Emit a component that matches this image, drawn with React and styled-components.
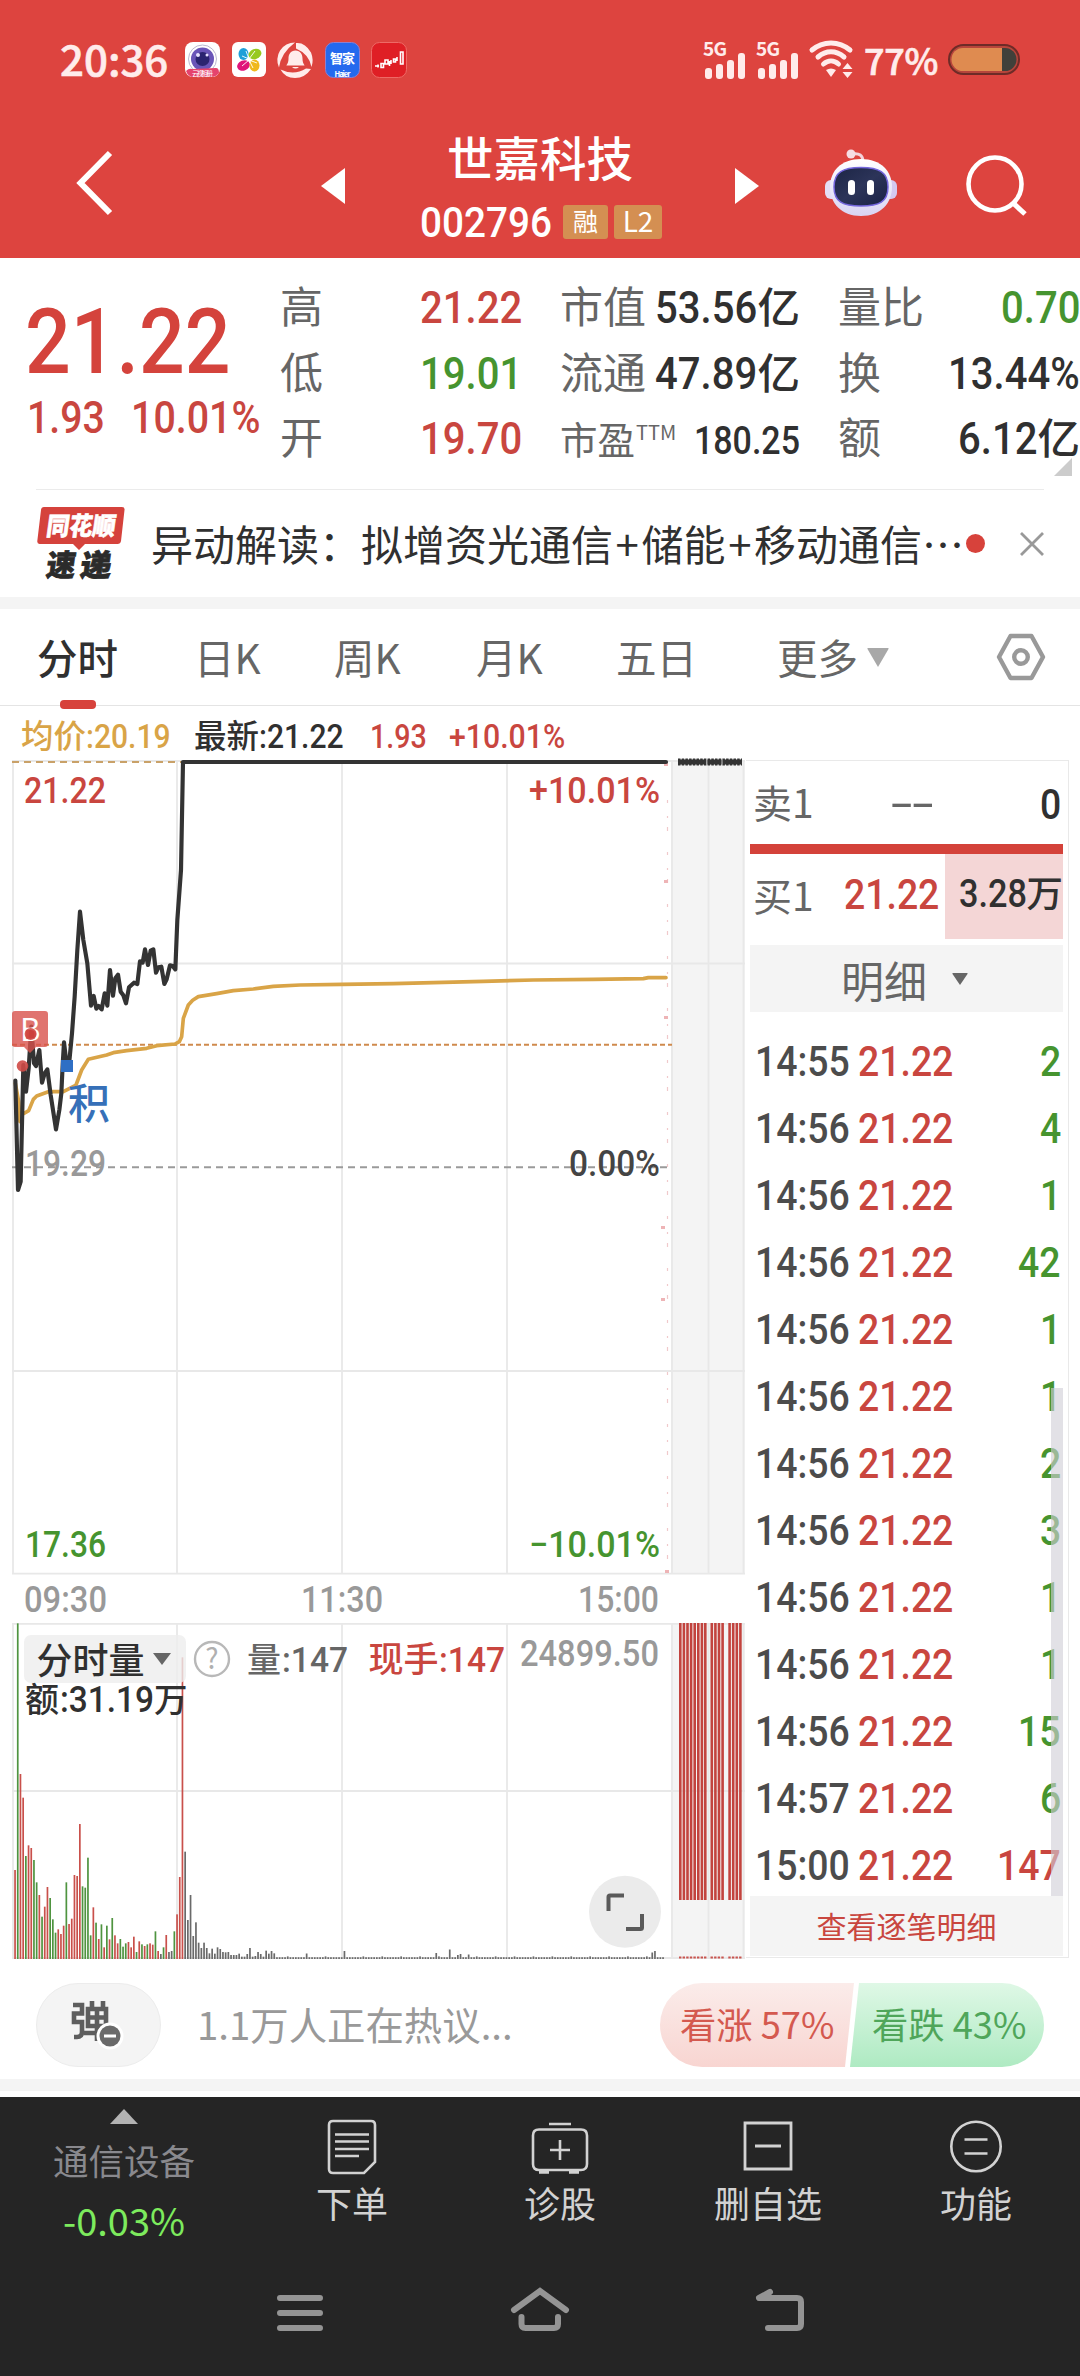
import React from "react";
import styled, { createGlobalStyle, css } from "styled-components";

const CJK = `"Noto Sans CJK SC", "Noto Sans", sans-serif`;
const DIN = `Roboto, "Noto Sans CJK SC", sans-serif`;
const RED = "#c9463f";
const GREEN = "#46942f";
const INK = "#303030";
const GRAY = "#666";

const Global = createGlobalStyle`
  * { box-sizing: border-box; }
  body { margin: 0; background: #fff; font-family: ${CJK}; color: ${INK}; }
  svg { display: block; overflow: visible; }
`;

const ADV = { ".": 0.28, ":": 0.27, "%": 0.735, "-": 0.39, "+": 0.556 };
const textWidth = (t) => [...t].reduce((w, c) => w + (ADV[c] || 0.564), 0);

const NumText = styled.span`
  display: inline-block;
  font-family: ${DIN};
  font-weight: ${(p) => p.$weight};
  font-size: ${(p) => p.$size}px;
  color: ${(p) => p.$color || "inherit"};
  white-space: pre;
  transform: scaleX(${(p) => p.$sx});
  transform-origin: left center;
  margin-right: ${(p) => -(1 - p.$sx) * p.$em * p.$size}px;
`;
const Num = ({ children, size = 45, sx = 0.89, color, weight = 500 }) => (
  <NumText $size={size} $sx={sx} $em={textWidth(children)} $color={color} $weight={weight}>
    {children}
  </NumText>
);

const Page = styled.div`
  width: 1080px;
  height: 2376px;
  display: flex;
  flex-direction: column;
  overflow: hidden;
  background: #fff;
`;

/* ---------- status + title ---------- */
const Header = styled.header`
  height: 258px;
  background: #dd443f;
  flex: none;
`;
const StatusBar = styled.div`
  height: 118px;
  padding: 0 60px;
  display: flex;
  align-items: center;
  justify-content: space-between;
  color: #ffeceb;
`;
const StatusGroup = styled.div`
  display: flex;
  align-items: center;
`;
const Clock = styled.span`
  font-size: 42px;
  font-weight: 500;
  -webkit-text-stroke: 0.6px #ffeceb;
  line-height: 50px;
  width: 125px;
  margin-top: -3px;
`;
const AppIcons = styled.div`
  display: flex;
  gap: 11.6px;
  margin-top: 1px;
`;
const Percent = styled.span`
  font-size: 36px;
  font-weight: 500;
  -webkit-text-stroke: 0.7px #ffeceb;
  line-height: 40px;
  width: 84px;
  margin: -1px 0 0 10px;
  letter-spacing: -0.3px;
`;
const TitleBar = styled.div`
  height: 140px;
  display: grid;
  grid-template-columns: 321px 24px 390px 24px 66px 72px 69px 60px;
`;
const Slot = styled.div`
  padding-top: ${(p) => p.$top}px;
  padding-left: ${(p) => p.$left || 0}px;
`;
const TitleBlock = styled.div`
  padding-top: 11px;
`;
const StockName = styled.h1`
  margin: 0;
  font-size: 46.5px;
  line-height: 54px;
  font-weight: 500;
  color: #fff;
  text-align: center;
`;
const CodeRow = styled.div`
  display: flex;
  align-items: center;
  height: 50px;
  margin-top: 14px;
  padding-left: 75px;
  color: #fff;
`;
const Badge = styled.span`
  width: ${(p) => p.$w}px;
  height: 34px;
  margin-left: ${(p) => p.$ml}px;
  border-radius: 3px;
  background: #d48f52;
  font-size: ${(p) => p.$fs}px;
  line-height: 31px;
  text-align: center;
`;

/* ---------- quote ---------- */
const Quote = styled.section`
  height: 231px;
  flex: none;
  padding-top: 14px;
  display: grid;
  grid-template-columns: 280px 242px 38px 240px 38px 242px;
  position: relative;
`;
const PriceBlock = styled.div`
  padding-left: 25px;
`;
const BigPrice = styled.div`
  height: 100px;
  line-height: 100px;
  margin-top: 21px;
`;
const Change = styled.div`
  display: flex;
  gap: 26px;
  height: 50px;
  line-height: 50px;
  padding-left: 2px;
  margin-top: 0;
`;
const StatCol = styled.div`
  grid-column: ${(p) => p.$col};
`;
const StatRow = styled.div`
  display: flex;
  justify-content: space-between;
  align-items: baseline;
  height: 65.5px;
  line-height: 65.5px;
  font-size: 42.5px;
  white-space: nowrap;
`;
const StatLabel = styled.span`
  color: ${GRAY};
  font-size: ${(p) => p.$fs || 43}px;
  sup {
    font-size: 20px;
    line-height: 0;
    vertical-align: 14px;
    margin-left: 1px;
  }
`;
const StatValue = styled.span`
  color: ${(p) => p.$color || INK};
  font-weight: 500;
`;
const Corner = styled.i`
  position: absolute;
  right: 8px;
  top: 200px;
  border-style: solid;
  border-width: 0 0 18px 18px;
  border-color: transparent transparent #ccc transparent;
`;

/* ---------- news ---------- */
const News = styled.section`
  height: 108px;
  flex: none;
  margin: 0 36px;
  border-top: 1.5px solid #ebebeb;
  display: flex;
  align-items: center;
`;
const NewsText = styled.div`
  font-size: 42px;
  line-height: 60px;
  width: 813px;
  margin-left: 24px;
  margin-top: -2px;
  white-space: nowrap;
  flex: none;
  b { font-weight: 400; margin: 0 2.6px; }
`;
const Band = styled.div`
  height: 12px;
  flex: none;
  background: #f4f4f4;
`;
const RedDot = styled.i`
  width: 19px;
  height: 19px;
  margin-left: 2px;
  margin-right: 35px;
  border-radius: 50%;
  background: #d7423b;
  flex: none;
`;

/* ---------- tabs ---------- */
const Tabs = styled.nav`
  height: 97px;
  flex: none;
  border-bottom: 1.5px solid #e4e4e4;
  display: grid;
  grid-template-columns: 37px 157px 140px 142px 140px 161px 219px 1fr;
`;
const Tab = styled.div`
  font-size: 40.5px;
  line-height: 96px;
  color: ${(p) => (p.$active ? INK : GRAY)};
  font-weight: ${(p) => (p.$active ? 500 : 400)};
  display: flex;
  align-items: center;
  position: relative;
  padding-bottom: 4px;
  ${(p) =>
    p.$active &&
    css`
      &::after {
        content: "";
        position: absolute;
        left: 23px;
        bottom: 0;
        width: 36px;
        height: 9px;
        border-radius: 4px;
        background: #d7423b;
      }
    `}
`;

/* ---------- chart info ---------- */
const InfoRow = styled.div`
  height: 50px;
  flex: none;
  padding: 0 0 0 21px;
  display: flex;
  align-items: baseline;
  line-height: 55px;
  font-size: 32.5px;
`;
const Info = styled.span`
  width: ${(p) => p.$w}px;
  color: ${(p) => p.$color};
  font-weight: 500;
  white-space: nowrap;
`;

const Main = styled.section`
  height: 1206px;
  flex: none;
  display: flex;
`;

/* ---------- order panel ---------- */
const Panel = styled.aside`
  width: 323px;
  height: 1198px;
  margin-top: 4px;
  border: 1.5px solid #e9e9e9;
  border-left: 0;
  padding: 0 5px 0 4px;
  display: flex;
  flex-direction: column;
`;
const BookRow = styled.div`
  height: ${(p) => p.$h}px;
  display: grid;
  grid-template-columns: 90px 1fr 118px;
  align-items: center;
  color: ${GRAY};
  font-size: 39px;
  line-height: 60px;
`;
const BookLabel = styled.span`
  padding-left: 3px;
  display: flex;
  align-items: baseline;
  margin-top: ${(p) => p.$mt || 0}px;
`;
const BookPrice = styled.span`
  padding-left: ${(p) => p.$pl}px;
  margin-top: ${(p) => p.$mt || 0}px;
`;
const BookQty = styled.span`
  height: 100%;
  padding: ${(p) => p.$pt}px ${(p) => p.$pr}px 0 0;
  text-align: right;
  color: ${INK};
  font-size: 36.5px;
  font-weight: 500;
  white-space: nowrap;
  background: ${(p) => p.$bg || "none"};
`;
const RedBar = styled.div`
  height: 10px;
  background: #d4423a;
`;
const DetailHead = styled.div`
  height: 67px;
  margin-top: 6px;
  background: #f4f4f4;
  display: flex;
  align-items: center;
  gap: 25px;
  padding-left: 91px;
  font-size: 43px;
  line-height: 62px;
  color: ${GRAY};
`;
const Ticks = styled.div`
  position: relative;
  padding-top: 16px;
  height: 884px;
`;
const Tick = styled.div`
  height: 67px;
  line-height: 67px;
  display: grid;
  grid-template-columns: 103px 120px 1fr;
  padding: 0 2px 0 5px;
  span:last-child { justify-self: end; }
`;
const ScrollThumb = styled.i`
  position: absolute;
  right: 0;
  top: 376px;
  width: 12px;
  height: 508px;
  background: rgba(208, 206, 214, 0.62);
`;
const ViewAll = styled.div`
  height: 60px;
  line-height: 58px;
  background: #f4f4f4;
  color: ${RED};
  font-size: 30px;
  text-align: center;
`;

/* ---------- comment strip ---------- */
const Talk = styled.section`
  height: 117px;
  flex: none;
  padding: 21px 36px 12px;
  display: flex;
`;
const Pill = styled.div`
  width: 125px;
  height: 84px;
  border-radius: 42px;
  border: 1px solid #ececec;
  background: #f4f4f4;
  padding: 15px 0 0 33px;
`;
const TalkText = styled.div`
  width: 499px;
  padding-left: 36px;
  font-size: 38.4px;
  line-height: 81px;
  color: #999;
`;
const Vote = styled.div`
  display: flex;
  font-size: 36.3px;
  line-height: 80px;
`;
const VoteHalf = styled.div`
  width: 194px;
  height: 84px;
  margin-left: ${(p) => (p.$up ? 0 : -4)}px;
  padding-left: ${(p) => (p.$up ? 20 : 22)}px;
  white-space: nowrap;
  color: ${(p) => (p.$up ? "#d4594f" : "#4fa65a")};
  background: ${(p) =>
    p.$up ? "linear-gradient(#fbecea, #f8d5d1)" : "linear-gradient(#dff8e6, #aeeac2)"};
  border-radius: ${(p) => (p.$up ? "42px 0 0 42px" : "0 42px 42px 0")};
  clip-path: ${(p) =>
    p.$up ? "polygon(0 0, 100% 0, 185px 100%, 0 100%)" : "polygon(9px 0, 100% 0, 100% 100%, 0 100%)"};
`;

/* ---------- bottom ---------- */
const Toolbar = styled.nav`
  height: 148px;
  margin-top: 6px;
  flex: none;
  background: #252525;
  display: grid;
  grid-template-columns: 248px 208px 208px 208px 208px;
`;
const Sector = styled.div`
  display: flex;
  flex-direction: column;
  align-items: center;
  padding-top: 12px;
  color: #89898e;
  font-size: 35.5px;
  line-height: 44px;
  white-space: nowrap;
  > svg { margin-bottom: 14px; }
`;
const SectorChange = styled.div`
  margin-top: 16px;
  color: #7deb5d;
  font-size: 38px;
  line-height: 44px;
`;
const Tool = styled.div`
  display: flex;
  flex-direction: column;
  align-items: center;
  padding-top: 22px;
  color: #d2d2d2;
  font-size: 36px;
  line-height: 44px;
  > svg { margin-bottom: 5px; }
`;
const SystemNav = styled.nav`
  flex: 1;
  background: #252525;
  display: flex;
  justify-content: center;
  gap: 180px;
  padding-top: 36px;
`;

/* ---------- glyphs ---------- */
const Signal = () => (
  <svg width="53" height="40" viewBox="0 0 53 40" fill="#ffeceb">
    <text x="0" y="17" fontFamily="Noto Sans CJK SC, sans-serif" fontWeight="700" fontSize="19" textLength="24">5G</text>
    <rect x="2" y="29" width="7" height="11" rx="3" />
    <rect x="13" y="25" width="7" height="15" rx="3" />
    <rect x="24" y="21" width="7" height="19" rx="3" />
    <rect x="35" y="14" width="7" height="26" rx="3" />
  </svg>
);
const Wifi = () => (
  <svg width="45" height="38" viewBox="0 0 45 38" fill="none" stroke="#ffeceb" strokeWidth="5" strokeLinecap="round">
    <path d="M3 10C14 .5 30 .5 41 10" />
    <path d="M9 17C17 10 27 10 35 17" />
    <path d="M14.500 24C19 20 25 20 29.500 24" />
    <path d="M17 30q5-3 10 0l-5 7z" fill="#ffeceb" stroke="none" />
    <path d="M38.500 23l5 6h-10zM38.500 38l5-6h-10z" fill="#ffeceb" stroke="none" />
  </svg>
);
const BatteryIcon = styled.svg`
  margin-top: 2px;
`;
const Battery = () => (
  <BatteryIcon width="72" height="32" viewBox="0 0 72 32">
    <rect x="1" y="1" width="70" height="29" rx="14.500" fill="#b8453b" stroke="#6e2b27" strokeWidth="2" />
    <path d="M15 4H54V27H15A11.500 11.500 0 0 1 15 4z" fill="#df8b50" />
    <path d="M54 4h3a11.500 11.500 0 0 1 0 23h-3z" fill="#40403a" />
  </BatteryIcon>
);
const AppCamera = () => (
  <svg width="35" height="36" viewBox="0 0 35 36">
    <rect width="35" height="35" rx="8" fill="#fff" />
    <circle cx="17.500" cy="17" r="14" fill="none" stroke="#bbb7cf" />
    <circle cx="17.500" cy="17" r="11.500" fill="#6a55b8" />
    <circle cx="17.500" cy="17" r="7" fill="#2b2470" />
    <circle cx="13" cy="13" r="2" fill="#e8e2ff" />
    <circle cx="22" cy="13" r="1.500" fill="#e8e2ff" />
    <path d="M1 29q3-3 6-2l24-1q3 0 3 5q-3 4-8 4H9q-6 0-8-6z" fill="#e5436d" />
    <text x="7" y="34" fontSize="7" fill="#fff" fontFamily="Noto Sans CJK SC, sans-serif" textLength="21">云视相册</text>
  </svg>
);
const AppPetals = () => (
  <svg width="35" height="36" viewBox="0 0 35 36">
    <rect width="34" height="35" rx="6" fill="#fff" />
    <ellipse cx="11.500" cy="12" rx="5" ry="6" fill="#1f9fd8" />
    <ellipse cx="23" cy="12" rx="6.500" ry="5" fill="#97c91f" transform="rotate(-20 23 12)" />
    <ellipse cx="11.500" cy="23.500" rx="6.500" ry="5" fill="#e0147a" transform="rotate(-20 11.500 23.500)" />
    <ellipse cx="22.500" cy="23.500" rx="5" ry="6" fill="#f0b81c" />
    <path d="M10 14l7 3-3-8M25 21l-8-3 4 8M17 17l6-8M17 18l-7 6" stroke="#fff" fill="none" strokeWidth=".9" />
  </svg>
);
const AppBell = () => (
  <svg width="35" height="36" viewBox="0 0 35 36">
    <g fill="#ffeceb">
      <path d="M17 .5A17.500 17.500 0 0 0 1 25.500Q3 11 17 .5z" />
      <path d="M18 1Q27 0 33 10.500Q36 18 33.500 25Q31 12 18 6.500z" />
      <path d="M2.500 27.500Q16 34 28 26.500L33 27Q27 36 17 36Q7 36 2.500 27.500z" />
    </g>
    <path d="M17.500 8.500c5 0 7 4 7 8 0 5 2 6 2 7H8.500c0-1 2-2 2-7 0-4 2-8 7-8zM14 25h7q-3.500 3-7 0z" fill="#ffeceb" />
  </svg>
);
const AppHome = () => (
  <svg width="35" height="36" viewBox="0 0 35 36" fill="#fff" fontFamily="Noto Sans CJK SC, sans-serif">
    <rect x=".5" y=".5" width="34" height="35" rx="8" fill="#2469ee" stroke="#8c7fd0" />
    <text x="5" y="20.500" fontSize="13" fontWeight="700" textLength="25">智家</text>
    <text x="9.500" y="34.500" fontSize="7.500" fontWeight="700" textLength="16">Haier</text>
  </svg>
);
const AppTrend = () => (
  <svg width="36" height="36" viewBox="0 0 36 36">
    <rect x=".5" y=".5" width="35" height="35" rx="8" fill="#df1f25" stroke="#ee6a66" />
    <g stroke="#fff" strokeWidth="1.600" fill="none">
      <path d="M4 24h4M7 22.500v3M10 21.500h2.500v4H10zM14 18h3v4h-3zM18.500 19v5M20 18v4M22.500 17h2v3h-2zM26 15v4M29.500 10h2.500v12h-2.500z" />
    </g>
  </svg>
);
const Robot = () => (
  <svg width="72" height="70" viewBox="0 0 72 70">
    <defs>
      <linearGradient id="shell" x1="0" y1="0" x2="0" y2="1">
        <stop offset="0" stopColor="#fff" />
        <stop offset="1" stopColor="#d9d4f3" />
      </linearGradient>
      <linearGradient id="visor" x1="0" y1="0" x2="1" y2="1">
        <stop offset="0" stopColor="#1c2545" />
        <stop offset=".5" stopColor="#2c3459" />
        <stop offset="1" stopColor="#1a2145" />
      </linearGradient>
    </defs>
    <path d="M27 5q11-2 11 8" fill="none" stroke="#f3d4dc" strokeWidth="3" />
    <circle cx="26" cy="5" r="4.500" fill="#f6dde4" />
    <rect x="0" y="31" width="14" height="19" rx="6" fill="#e4def5" />
    <rect x="58" y="31" width="14" height="19" rx="6" fill="#d4c9f0" />
    <path d="M36 10C56 10 67 22 67 38S56 67 36 67 5 54 5 38 16 10 36 10z" fill="url(#shell)" />
    <path d="M36 18.500C54 18.500 63 23 63 38S54 57 36 57 9 53 9 38 18 18.500 36 18.500z" fill="url(#visor)" stroke="#7466dc" strokeWidth="1.500" />
    <rect x="23" y="31" width="7" height="15" rx="3.500" fill="#fff" />
    <rect x="42" y="31" width="7" height="15" rx="3.500" fill="#fff" />
  </svg>
);
const NewsLogo = () => (
  <svg width="91" height="74" viewBox="0 0 91 74" fontFamily="Noto Sans CJK SC, sans-serif" fontWeight="900">
    <path d="M8 0H86q3 0 2.500 3L85 34q-.5 3-3.500 3H49l-6 6-6-6H3.500Q1 37 1.300 34L5 3Q5.300 0 8 0z" fill="#d5423c" />
    <g transform="skewX(-8)">
      <text x="13.500" y="28" fontSize="25" fill="#fff" stroke="#fff" strokeWidth=".6" textLength="69" lengthAdjust="spacingAndGlyphs">同花顺</text>
      <text x="19" y="69" fontSize="30" fill="#2b2b2b" stroke="#2b2b2b" strokeWidth=".8" textLength="29" lengthAdjust="spacingAndGlyphs">速</text>
      <text x="53" y="69" fontSize="30" fill="#2b2b2b" stroke="#2b2b2b" strokeWidth=".8" textLength="31" lengthAdjust="spacingAndGlyphs">递</text>
    </g>
  </svg>
);
const Down = ({ w, h, color, ml = 0 }) => (
  <svg width={w + ml} height={h} viewBox={`${-ml} 0 ${w + ml} ${h}`}>
    <path d={`M1 0H${w - 1}Q${w} 0 ${w - 0.5} 1L${w / 2} ${h}L.5 1Q0 0 1 0z`} fill={color} />
  </svg>
);

/* ---------- intraday chart ---------- */
const PRICE = "46,1022 54,1350 62,1325 70,975 78,1055 86,985 94,860 102,970 108,978 118,930 126,1028 134,1000 142,988 152,1065 168,1168 178,1110 184,1060 188,975 192,907 200,975 206,985 216,880 224,770 232,630 240,515 250,600 262,670 273,797 281,768 289,806 296,798 305,808 314,760 322,797 330,690 339,767 346,715 354,704 362,755 370,766 378,790 387,742 402,728 412,732 420,664 428,668 435,628 444,675 452,632 460,628 468,698 475,682 484,680 493,732 500,718 510,676 518,678 526,688 532,540 543,390 549,66 1998,66";
const AVERAGE = "46,1030 56,1085 60,1145 64,1125 86,1112 100,1078 110,1068 145,1055 190,1055 215,1042 228,1035 245,990 265,958 320,945 340,938 380,932 440,925 470,917 525,912 538,905 545,890 550,835 565,795 578,781 595,770 650,761 700,752 760,747 820,739 900,735 1026,733 1180,731 1300,728 1450,724 1600,720 1780,718 1930,716 1945,713 1998,713";
const VOL_COLORS = { R: "#c9504b", G: "#4f9440", K: "#6a6a6a" };
const VOLUME = "R1110 G370 R822 R893 G1068 R1036 R1044 G1080 G1147 R1185 G1250 R1220 R1161 G1194 G1258 G1298 R1288 R1302 R1277 G1147 R1272 R1256 R1125 R1128 R972 G1159 G1163 G1073 G1306 R1222 G1268 R1317 G1273 R1342 G1277 R1318 G1254 R1306 R1330 G1317 G1340 G1330 R1326 R1342 R1310 G1356 R1324 G1333 R1338 G1333 R1330 R1334 G1294 R1353 K1362 G1342 R1305 K1356 K1353 G1294 R1243 R1131 R472 K1055 K1260 K1185 K1308 K1267 K1328 K1344 K1328 K1344 K1360 K1346 K1361 K1342 K1347 K1356 K1357 K1356 K1365 K1365 K1365 K1361 K1370 K1370 K1362 K1344 K1370 K1368 K1356 K1362 K1370 K1352 K1361 K1353 K1360"
  .split(" ")
  .map((s) => ({ c: VOL_COLORS[s[0]], h: (1377 - Number(s.slice(1))) / 3 }));
const SPIKES = { 108: 5.5, 122: 8, 156: 6, 161: 9.5, 164: 4, 165: 5, 168: 4.5, 236: 6.5, 237: 8 };
const BARS = Array.from({ length: 241 }, (_, i) => VOLUME[i] || { c: "#6a6a6a", h: SPIKES[i] || (i % 7 === 3 ? 2.6 : 1.8) });
const AFTER = [679, 682.6, 686.2, 689.800, 693.4, 697, 700.6, 704, 710.5, 714.1, 717.7, 721.3, 728.3, 731.9, 735.5, 739.1];
const MARKS = [[664, 763], [664, 880], [664, 1016], [661, 1226], [661, 1298], [665, 1570]];

const Label = ({ x, y, w, size = 36, color, children, end }) => (
  <text x={x} y={y} fontSize={size} fill={color} fontFamily={DIN} fontWeight="500" textLength={w} lengthAdjust="spacingAndGlyphs" textAnchor={end ? "end" : "start"}>
    {children}
  </text>
);

const Chart = () => (
  <svg width="746" height="1206" viewBox="0 756 746 1206">
    <rect x="671" y="761" width="74" height="812" fill="#f4f4f4" />
    <rect x="671" y="1624" width="74" height="334" fill="#f4f4f4" />
    <g stroke="#e8e8e8" strokeWidth="1.800" fill="none">
      <path d="M12 761H745M12 963.500H745M12 1371H745M12 1573.700H745M12 1623.800H745M12 1791H745M12 1958H745" />
      <path d="M13 761V1574M177 761V1574M342 761V1574M507 761V1574M672 761V1574M708.500 761V1574M743.500 761V1574" />
      <path d="M13 1624V1958M177 1624V1958M342 1624V1958M507 1624V1958M672 1624V1958M708.500 1624V1958M743.500 1624V1958" />
    </g>
    <path d="M12 762H183" stroke="#c9a168" strokeWidth="2" strokeDasharray="7 5" />
    <path d="M12 1167.300H671" stroke="#9a9a9a" strokeWidth="2" strokeDasharray="7 5" />
    <path d="M12 1044.800H672" stroke="#cf8a4d" strokeWidth="2" strokeDasharray="5 3" />
    <path d="M667.500 800V1570" stroke="#f0c9cb" strokeWidth="1.200" strokeDasharray="3 13 2 9 4 21" />
    {MARKS.map(([x, y]) => (
      <rect key={y} x={x} y={y} width="4" height="3" fill="#eeb4b6" />
    ))}
    {BARS.map((b, i) => (
      <rect key={i} x={14.2 + i * 2.7} y={1959 - b.h} width="1.7" height={b.h} fill={b.c} />
    ))}
    {AFTER.map((x) => (
      <rect key={x} x={x} y="1623" width="2.6" height="277" fill="#c2433e" />
    ))}
    {AFTER.map((x) => (
      <rect key={x} x={x} y="1956.500" width="2.4" height="2" fill="#c8544f" />
    ))}
    <Label x={24} y={803} w={82} color={RED}>21.22</Label>
    <Label x={660} y={803} w={131} color={RED} end>+10.01%</Label>
    <Label x={25} y={1176} w={81} color="#999">19.29</Label>
    <Label x={660} y={1176} w={91} color="#444" end>0.00%</Label>
    <Label x={25} y={1557} w={81} color={GREEN}>17.36</Label>
    <Label x={660} y={1557} w={131} color={GREEN} end>−10.01%</Label>
    <Label x={24} y={1612} w={83} color="#999">09:30</Label>
    <Label x={301} y={1612} w={82} color="#999">11:30</Label>
    <Label x={659} y={1612} w={81} color="#999" end>15:00</Label>
    <Label x={659} y={1666} w={139} color="#999" end>24899.50</Label>
    <g transform="translate(0 740) scale(.33333)" fill="none" strokeLinejoin="round" strokeLinecap="round">
      <polyline points={AVERAGE} stroke="#d9a447" strokeWidth="11" />
      <polyline points={PRICE} stroke="#333" strokeWidth="12.500" />
    </g>
    <path d="M678 762H742" stroke="#333" strokeWidth="5" strokeDasharray="27 2.5 14 2 18" />
    <path d="M678 762H742" stroke="#333" strokeWidth="7" strokeDasharray="2.5 1.2" />
    <path d="M15 1011H45q3 0 3 3V1044q0 3-3 3H36l-6 6-6-6H15q-3 0-3-3V1014q0-3 3-3z" fill="#d8514b" fillOpacity=".8" />
    <text x="20" y="1041" fontSize="31" fill="#fff" fontFamily={CJK} textLength="20">B</text>
    <circle cx="30.600" cy="1034" r="6" fill="#cf3f3b" fillOpacity=".85" />
    <circle cx="22.500" cy="1066" r="5.800" fill="#cf4a46" fillOpacity=".9" />
    <rect x="61" y="1060" width="12" height="12" fill="#2f6fc4" />
    <text x="68" y="1119" fontSize="42" fill="#3670b8" fontFamily={CJK} fontWeight="500">积</text>
    <rect x="24" y="1635" width="162" height="48" rx="7" fill="#ededed" fillOpacity=".8" />
    <text x="36.500" y="1674" fontSize="36" fill="#303030" fontFamily={CJK} fontWeight="500">分时量</text>
    <path d="M153 1653H171L162 1665z" fill="#666" />
    <circle cx="212" cy="1659" r="17" fill="none" stroke="#b8b8b8" strokeWidth="2.400" />
    <text x="212" y="1669" fontSize="28" fill="#b0b0b0" fontFamily={CJK} textAnchor="middle">?</text>
    <text x="247" y="1672" fontSize="34" fill={GRAY} fontFamily={CJK} fontWeight="500">量</text>
    <Label x={282} y={1672} w={66} color={GRAY} size={35}>:147</Label>
    <text x="368.500" y="1672" fontSize="35" fill={RED} fontFamily={CJK} fontWeight="500">现手</text>
    <Label x={439} y={1672} w={66} color={RED} size={35}>:147</Label>
    <text x="25" y="1712" fontSize="34" fill={INK} fontFamily={CJK} fontWeight="500">额</text>
    <Label x={60} y={1712} w={94} color={INK} size={36}>:31.19</Label>
    <text x="154" y="1712" fontSize="33.500" fill={INK} fontFamily={CJK} fontWeight="500">万</text>
    <circle cx="625" cy="1911.700" r="36" fill="#ebebeb" />
    <path d="M608.500 1911V1897q0-1.500 1.500-1.500H624M642 1914V1927.500q0 1.500-1.500 1.500H626" fill="none" stroke="#5a5a5a" strokeWidth="4" />
  </svg>
);

/* ---------- data ---------- */
const TICKS = [
  ["14:55", "2"], ["14:56", "4"], ["14:56", "1"], ["14:56", "42"], ["14:56", "1"],
  ["14:56", "1"], ["14:56", "2"], ["14:56", "3"], ["14:56", "1"], ["14:56", "1"],
  ["14:56", "15"], ["14:57", "6"], ["15:00", "147"],
];

const TOOLS = [
  ["下单", <svg width="50" height="56" viewBox="0 0 50 56" fill="none" stroke="#d2d2d2" strokeWidth="2.6"><path d="M6 2H44q4 0 4 4V43L37 54H6q-4 0-4-4V6q0-4 4-4zM8 15.500H42M8 22.500H42M8 30H42M8 37H32" /></svg>],
  ["诊股", <svg width="58" height="56" viewBox="0 0 58 56" fill="none" stroke="#d2d2d2" strokeWidth="2.6"><path d="M18 5H40M8 10.500H50q6 0 6 6V45q0 6-6 6H8q-6 0-6-6V16.500q0-6 6-6zM29 21V41M19 31H39" /><path d="M8 53H18M38 53H48" strokeWidth="3.500" /></svg>],
  ["删自选", <svg width="50" height="56" viewBox="0 0 50 56" fill="none" stroke="#d2d2d2" strokeWidth="2.800"><path d="M2 4H48V50H2zM12 27H38" /></svg>],
  ["功能", <svg width="54" height="56" viewBox="0 0 54 56" fill="none" stroke="#d2d2d2" strokeWidth="2.6"><circle cx="27" cy="27.500" r="24.700" /><path d="M15.500 20.500H38.500M15.500 34.500H38.500" /></svg>],
];

export default function App() {
  return (
    <Page>
      <Global />
      <Header>
        <StatusBar>
          <StatusGroup>
            <Clock>20:36</Clock>
            <AppIcons>
              <AppCamera /><AppPetals /><AppBell /><AppHome /><AppTrend />
            </AppIcons>
          </StatusGroup>
          <StatusGroup>
            <Signal /><Signal /><Wifi />
            <Percent>77%</Percent>
            <Battery />
          </StatusGroup>
        </StatusBar>
        <TitleBar>
          <Slot $top={31} $left={75}>
            <svg width="40" height="68" viewBox="0 0 40 68" fill="none" stroke="#fff" strokeWidth="6"><path d="M35 4L5.500 34L35 64" /></svg>
          </Slot>
          <Slot $top={50}>
            <svg width="24" height="36"><path d="M24 0V36L0 18z" fill="#fff" /></svg>
          </Slot>
          <TitleBlock>
            <StockName>世嘉科技</StockName>
            <CodeRow>
              <Num size={42.5} sx={0.91}>002796</Num>
              <Badge $w={45} $ml={11} $fs={25}>融</Badge>
              <Badge $w={48} $ml={6} $fs={28}>L2</Badge>
            </CodeRow>
          </TitleBlock>
          <Slot $top={50}>
            <svg width="24" height="36"><path d="M0 0V36L24 18z" fill="#fff" /></svg>
          </Slot>
          <div />
          <Slot $top={31}><Robot /></Slot>
          <div />
          <Slot $top={36}>
            <svg width="62" height="62" viewBox="0 0 62 62" fill="none" stroke="#fff" strokeWidth="4.6"><circle cx="29" cy="30" r="26.500" /><path d="M47 49L59 60" strokeWidth="5" /></svg>
          </Slot>
        </TitleBar>
      </Header>

      <Quote>
        <PriceBlock>
          <BigPrice><Num size={90} sx={0.895} color="#d4433c">21.22</Num></BigPrice>
          <Change>
            <Num sx={0.87} color={RED}>1.93</Num>
            <Num sx={0.875} color={RED}>10.01%</Num>
          </Change>
        </PriceBlock>
        <StatCol $col="2">
          <StatRow><StatLabel>高</StatLabel><StatValue $color={RED}><Num>21.22</Num></StatValue></StatRow>
          <StatRow><StatLabel>低</StatLabel><StatValue $color={GREEN}><Num>19.01</Num></StatValue></StatRow>
          <StatRow><StatLabel>开</StatLabel><StatValue $color={RED}><Num>19.70</Num></StatValue></StatRow>
        </StatCol>
        <StatCol $col="4">
          <StatRow><StatLabel>市值</StatLabel><StatValue><Num>53.56</Num>亿</StatValue></StatRow>
          <StatRow><StatLabel>流通</StatLabel><StatValue><Num>47.89</Num>亿</StatValue></StatRow>
          <StatRow><StatLabel $fs={37.5}>市盈<sup>TTM</sup></StatLabel><StatValue><Num size={39.5} sx={0.86}>180.25</Num></StatValue></StatRow>
        </StatCol>
        <StatCol $col="6">
          <StatRow><StatLabel>量比</StatLabel><StatValue $color={GREEN}><Num>0.70</Num></StatValue></StatRow>
          <StatRow><StatLabel>换</StatLabel><StatValue><Num>13.44%</Num></StatValue></StatRow>
          <StatRow><StatLabel>额</StatLabel><StatValue><Num>6.12</Num>亿</StatValue></StatRow>
        </StatCol>
        <Corner />
      </Quote>

      <News>
        <NewsLogo />
        <NewsText>异动解读：拟增资光通信<b>+</b>储能<b>+</b>移动通信…</NewsText>
        <RedDot />
        <svg width="24" height="24" viewBox="0 0 24 24" stroke="#999" strokeWidth="2.800"><path d="M1 1L23 23M23 1L1 23" /></svg>
      </News>
      <Band />

      <Tabs>
        <div />
        <Tab $active>分时</Tab>
        <Tab>日K</Tab>
        <Tab>周K</Tab>
        <Tab>月K</Tab>
        <Tab>五日</Tab>
        <Tab>更多<Down w={22} h={19} color="#a8a8a8" ml={9} /></Tab>
        <Tab>
          <svg width="50" height="48" viewBox="0 0 50 48" fill="none" stroke="#999" strokeWidth="4.400" strokeLinejoin="round">
            <path d="M14.500 3H35.500L47 24L35.500 45H14.500L3 24z" />
            <circle cx="25" cy="24" r="6.800" />
          </svg>
        </Tab>
      </Tabs>

      <InfoRow>
        <Info $w={173} $color="#d9a447">均价<Num size={32.500} sx={0.925}>:20.19</Num></Info>
        <Info $w={176} $color={INK}>最新<Num size={32.500} sx={0.925}>:21.22</Num></Info>
        <Info $w={79} $color={RED}><Num size={32.500} sx={0.88}>1.93</Num></Info>
        <Info $w={150} $color={RED}><Num size={32.500} sx={0.93}>+10.01%</Num></Info>
      </InfoRow>

      <Main>
        <Chart />
        <Panel>
          <BookRow $h={83}>
            <BookLabel $mt={-3}>卖1</BookLabel>
            <BookPrice $pl={51}><Num size={44} sx={1.75} weight={400}>--</Num></BookPrice>
            <BookQty $pt={13} $pr={2}><Num size={42}>0</Num></BookQty>
          </BookRow>
          <RedBar />
          <BookRow $h={85}>
            <BookLabel $mt={-6}>买1</BookLabel>
            <BookPrice $pl={4} $mt={-6}><Num size={42} color={RED}>21.22</Num></BookPrice>
            <BookQty $bg="#f4d6d6" $pt={8} $pr={0}><Num size={38.500}>3.28</Num>万</BookQty>
          </BookRow>
          <DetailHead>明细<Down w={16} h={12} color="#666" /></DetailHead>
          <Ticks>
            {TICKS.map(([t, q], i) => (
              <Tick key={i}>
                <Num size={42} color="#4c4c4c">{t}</Num>
                <Num size={42} color={RED}>21.22</Num>
                <Num size={42} color={q === "147" ? RED : GREEN}>{q}</Num>
              </Tick>
            ))}
            <ScrollThumb />
          </Ticks>
          <ViewAll>查看逐笔明细</ViewAll>
        </Panel>
      </Main>

      <Talk>
        <Pill>
          <svg width="56" height="56" viewBox="0 0 56 56">
            <path d="M3 6H12V14.500H4V23H12V33q0 5-5 5H4M18 10H36V27H18zM18 18.500H36M27 8V42M22 2v7M33 2v7M14 34H30" fill="none" stroke="#5e5e5e" strokeWidth="4.600" />
            <circle cx="40" cy="37" r="13.500" fill="#fff" />
            <circle cx="40" cy="37" r="10.500" fill="#6a6a6a" />
            <path d="M34 37H46" stroke="#fff" strokeWidth="3" />
          </svg>
        </Pill>
        <TalkText>1.1万人正在热议...</TalkText>
        <Vote>
          <VoteHalf $up>看涨 57%</VoteHalf>
          <VoteHalf>看跌 43%</VoteHalf>
        </Vote>
      </Talk>
      <Band />

      <Toolbar>
        <Sector>
          <svg width="28" height="15"><path d="M14 0L28 15H0z" fill="#b3b3b3" /></svg>
          通信设备
          <SectorChange>-0.03%</SectorChange>
        </Sector>
        {TOOLS.map(([name, icon]) => (
          <Tool key={name}>{icon}{name}</Tool>
        ))}
      </Toolbar>
      <SystemNav>
        <svg width="60" height="60" viewBox="0 0 60 60" fill="none" stroke="#949494" strokeWidth="6" strokeLinecap="round"><path d="M10 17H50M10 32H50M10 47H50" /></svg>
        <svg width="60" height="60" viewBox="0 0 60 60" fill="none" stroke="#949494" strokeWidth="6" strokeLinecap="round"><path d="M4 29L30 10L56 29M11.500 36V43q0 4 4 4H44q4 0 4-4V36" /></svg>
        <svg width="60" height="60" viewBox="0 0 60 60" fill="none" stroke="#949494" strokeWidth="6" strokeLinecap="round" strokeLinejoin="round"><path d="M20 11L9 17H47q4 0 4 4V43q0 4-4 4H18" /></svg>
      </SystemNav>
    </Page>
  );
}
